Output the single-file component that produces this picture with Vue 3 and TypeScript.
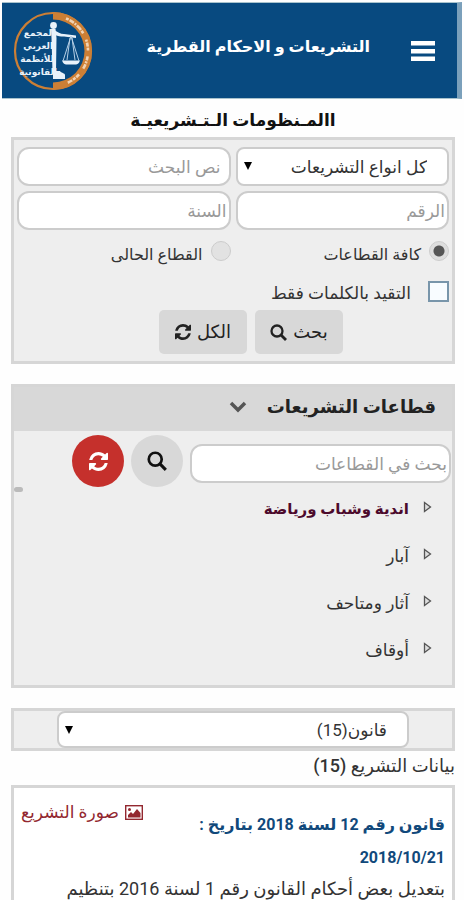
<script setup lang="ts">
import { ref } from 'vue'

const lawType = ref('all')
const scope = ref('all')
const wordsOnly = ref(false)
const group = ref('law')
const sectors = ['اندية وشباب ورياضة', 'آبار', 'آثار ومتاحف', 'أوقاف']
const activeSector = ref(0)
</script>

<template>
  <div class="page" dir="rtl" lang="ar">
    <header class="topbar">
      <button class="menu" type="button" aria-label="القائمة">
        <svg width="24" height="20" viewBox="0 0 24 20" aria-hidden="true">
          <path d="M0 0h24v4.500H0zM0 8h24v4.500H0zM0 15.500h24V20H0z" fill="#fff" />
        </svg>
      </button>
      <h1>التشريعات و الاحكام القطرية</h1>
      <svg class="logo" width="80" height="80" viewBox="0 0 80 80" aria-hidden="true">
        <circle cx="40" cy="40" r="38" fill="none" stroke="#cc7f35" stroke-width="2.200" />
        <path d="M40 1a39 39 0 0 1 0 78v-7.500a31.500 31.500 0 0 0 0-63z" fill="#cc7f35" />
        <path d="M53 7.500a35 35 0 0 1 0 65" fill="none" stroke="#f0d3b4" stroke-width="2.600" stroke-dasharray="3 1 5 1 2 1 6 1 3 7 2 1 4 1 3 6 4 1 2 1 5 7 4 1 3 1 5 12" />
        <g class="logo-text">
          <text x="42" y="25">المجمع</text>
          <text x="40" y="38">العربي</text>
          <text x="41" y="51">للأنظمة</text>
          <text x="44" y="64">القانونية</text>
        </g>
        <g fill="#e9f2fa">
          <circle cx="40.500" cy="14.500" r="3.400" />
          <path d="M38 18h4.500l1 9-.5 34h-3.500l-1-34z" />
          <path d="M40 60h7c1 2 5 2 5 4v4H40z" />
          <path d="M41 19c4 2 6 4 10 4l12 1.500v2.500l-12-1.500c-4 0-6-.5-9-1.500z" />
          <path d="M49 49.500h18c-1 3-3 4-4 4H53c-1 0-3-1-4-4z" />
        </g>
        <path d="M58 25l-8 25M58 25l8 25M57 27l-3 22M59 27l3 22" fill="none" stroke="#b6d0e6" stroke-width="1" />
      </svg>
    </header>

    <main>
      <h2 class="page-title">االمـنظومات الـتـشريعيـة</h2>

      <form class="panel search" @submit.prevent>
        <div class="fields">
          <div class="select">
            <select v-model="lawType" aria-label="نوع التشريع">
              <option value="all">كل انواع التشريعات</option>
            </select>
            <svg width="8" height="8" viewBox="0 0 8 8" aria-hidden="true"><path d="M0 0h8L4 8z" /></svg>
          </div>
          <input class="wide-pad" type="text" placeholder="نص البحث" aria-label="نص البحث" />
          <input type="text" placeholder="الرقم" aria-label="الرقم" />
          <input type="text" placeholder="السنة" aria-label="السنة" />
        </div>
        <div class="radios">
          <label><input v-model="scope" type="radio" name="scope" value="all" /><span>كافة القطاعات</span></label>
          <label><input v-model="scope" type="radio" name="scope" value="current" /><span>القطاع الحالى</span></label>
        </div>
        <label class="check"><input v-model="wordsOnly" type="checkbox" /><span>التقيد بالكلمات فقط</span></label>
        <div class="actions">
          <button type="submit">
            <span>بحث</span>
            <svg width="17" height="17" viewBox="0 0 17 17" aria-hidden="true"><circle cx="7" cy="7" r="5.500" fill="none" stroke="currentColor" stroke-width="2.300" /><path d="M11 11l5 5" stroke="currentColor" stroke-width="2.800" /></svg>
          </button>
          <button type="reset">
            <span>الكل</span>
            <svg width="16" height="16" viewBox="0 0 1536 1536" aria-hidden="true"><path fill="currentColor" d="M1511 928q0 5-1 7-64 268-268 434.500T764 1536q-146 0-282.500-55T238 1324l-129 129q-19 19-45 19t-45-19-19-45V960q0-26 19-45t45-19h448q26 0 45 19t19 45-19 45l-137 137q71 66 161 102t187 36q134 0 250-65t186-179q11-17 53-117 8-23 30-23h192q13 0 22.500 9.500t9.500 22.500zm25-800v448q0 26-19 45t-45 19h-448q-26 0-45-19t-19-45 19-45l138-138Q969 256 768 256q-134 0-250 65T332 500q-11 17-53 117-8 23-30 23H50q-13 0-22.500-9.500T18 608v-7q65-268 270-434.500T768 0q146 0 284 55.500T1297 212l130-129q19-19 45-19t45 19 19 45z" /></svg>
          </button>
        </div>
      </form>

      <section class="panel sectors">
        <div class="sectors-head">
          <h3>قطاعات التشريعات</h3>
          <svg width="18" height="12" viewBox="0 0 18 12" aria-hidden="true"><path d="M2 2l7 7 7-7" fill="none" stroke="#555" stroke-width="3.500" /></svg>
        </div>
        <div class="sector-search">
          <input type="text" placeholder="بحث في القطاعات" aria-label="بحث في القطاعات" />
          <button class="round" type="button" aria-label="بحث">
            <svg width="20" height="20" viewBox="0 0 17 17" aria-hidden="true"><circle cx="7" cy="7" r="5.500" fill="none" stroke="currentColor" stroke-width="2.300" /><path d="M11 11l5 5" stroke="currentColor" stroke-width="2.600" /></svg>
          </button>
          <button class="round red" type="button" aria-label="تحديث">
            <svg width="19" height="19" viewBox="0 0 1536 1536" aria-hidden="true"><path fill="currentColor" d="M1511 928q0 5-1 7-64 268-268 434.500T764 1536q-146 0-282.500-55T238 1324l-129 129q-19 19-45 19t-45-19-19-45V960q0-26 19-45t45-19h448q26 0 45 19t19 45-19 45l-137 137q71 66 161 102t187 36q134 0 250-65t186-179q11-17 53-117 8-23 30-23h192q13 0 22.500 9.500t9.500 22.500zm25-800v448q0 26-19 45t-45 19h-448q-26 0-45-19t-19-45 19-45l138-138Q969 256 768 256q-134 0-250 65T332 500q-11 17-53 117-8 23-30 23H50q-13 0-22.500-9.500T18 608v-7q65-268 270-434.500T768 0q146 0 284 55.500T1297 212l130-129q19-19 45-19t45 19 19 45z" /></svg>
          </button>
        </div>
        <div class="list">
          <div class="thumb"></div>
          <ul>
            <li v-for="(name, i) in sectors" :key="name">
              <button type="button" :class="{ active: i === activeSector }" @click="activeSector = i">
                <svg width="9" height="12" viewBox="0 0 9 12" aria-hidden="true"><path d="M1.500 1.500v9l6-4.500z" fill="#ddd" stroke="#555" stroke-width="1.300" /></svg>
                <span>{{ name }}</span>
              </button>
            </li>
          </ul>
        </div>
      </section>

      <div class="panel group">
        <div class="select">
          <select v-model="group" aria-label="نوع النتائج">
            <option value="law">قانون(15)</option>
          </select>
          <svg width="8" height="8" viewBox="0 0 8 8" aria-hidden="true"><path d="M0 0h8L4 8z" /></svg>
        </div>
      </div>

      <h3 class="count">بيانات التشريع <b>(15)</b></h3>

      <article class="panel result">
        <div class="result-head">
          <h4>قانون رقم 12 لسنة 2018 بتاريخ : 2018/10/21</h4>
          <a href="#image">
            <svg width="18" height="15" viewBox="0 0 18 15" aria-hidden="true"><rect x=".7" y=".7" width="16.600" height="13.600" fill="none" stroke="currentColor" stroke-width="1.400" /><circle cx="4.500" cy="4.500" r="1.500" fill="currentColor" /><path d="M3 12.500V10l3-3 2 2 4-5 3.500 4v4.500z" fill="currentColor" /></svg>
            <span>صورة التشريع</span>
          </a>
        </div>
        <p>بتعديل بعض أحكام القانون رقم 1 لسنة 2016 بتنظيم</p>
      </article>
    </main>
  </div>
</template>

<style>
html {
  scrollbar-width: none;
  background: #fefefe;
}
</style>

<style scoped>
.page {
  box-sizing: border-box;
  padding: 2px 2px 0;
  font-family: Roboto, "DejaVu Sans", sans-serif;
  font-size: 17px;
  line-height: 24px;
  color: #333;
}
.page * {
  box-sizing: border-box;
}
h1, h2, h3, h4, p, ul {
  margin: 0;
  padding: 0;
}
button, input, select {
  font: inherit;
  color: inherit;
  margin: 0;
}
button {
  border: 0;
  background: none;
  padding: 0;
}
.topbar {
  display: flex;
  align-items: center;
  height: 97px;
  padding: 0 22px 0 11px;
  background: #084a80;
  border: solid #a9c3cd;
  border-width: 1px 5px 1px 0;
  border-right-color: #7ba0bb;
}
.menu {
  display: flex;
}
.topbar h1 {
  margin-inline-start: 41px;
  padding-bottom: 8px;
  font-size: 16px;
  line-height: 24px;
  color: #fff;
  white-space: nowrap;
}
.logo {
  margin-inline-start: auto;
  flex: none;
}
.logo-text {
  font-family: "DejaVu Sans", sans-serif;
  font-size: 9px;
  font-weight: bold;
  fill: #e9f2fa;
}
main {
  padding: 0 7px 0 9px;
}
.page-title {
  padding: 9px 0 5px;
  text-align: center;
  font-size: 17px;
  line-height: 24px;
  color: #111;
}
.panel {
  border: 3px solid #d6d6d6;
  background: #eee;
}
.search {
  padding: 7px 3px;
}
.fields {
  display: grid;
  grid-template-columns: 1fr 1fr;
  gap: 5px;
}
input[type="text"], select {
  width: 100%;
  min-width: 0;
  height: 39px;
  padding: 0 2px;
  border: 2px solid #ccc;
  border-radius: 12px;
  background: #fff;
}
input::placeholder {
  color: #999;
  opacity: 1;
}
input.wide-pad {
  padding: 0 8px;
}
.select {
  position: relative;
}
select {
  appearance: none;
  display: block;
  padding: 0 20px;
  border-radius: 8px;
}
.select svg {
  position: absolute;
  left: 8px;
  top: 15px;
}
.radios {
  display: grid;
  grid-template-columns: 1fr 1fr;
  gap: 5px;
  padding-top: 8px;
}
.radios label, .check {
  display: flex;
  align-items: center;
  gap: 8px;
  height: 34px;
}
.radios label {
  font-size: 16px;
}
.radios input {
  appearance: none;
  width: 20px;
  height: 20px;
  align-self: flex-start;
  margin-top: 3px;
  border: 1px solid #ccc;
  border-radius: 50%;
  background: #e2e2e2;
}
.radios input:checked {
  background: radial-gradient(circle, #555 0 5px, #ddd 6px);
}
.check {
  gap: 17px;
  height: 38px;
}
.check span {
  padding-top: 3px;
}
.check input {
  appearance: none;
  width: 21px;
  height: 21px;
  border: 2px solid #7895aa;
  background: #f8fcff;
}
.actions {
  display: flex;
  justify-content: center;
  gap: 8px;
  padding-left: 36px;
}
.actions button {
  display: flex;
  align-items: center;
  justify-content: center;
  gap: 6px;
  min-width: 88px;
  height: 44px;
  border-radius: 5px;
  background: #d8d8d8;
  font-size: 18px;
  color: #222;
}
.sectors {
  margin-top: 20px;
  padding-bottom: 14px;
}
.sectors-head {
  display: flex;
  align-items: center;
  gap: 20px;
  height: 44px;
  padding: 0 16px 4px;
  background: #d8d8d8;
}
.sectors-head h3 {
  font-size: 18px;
  line-height: 24px;
  color: #222;
}
.sector-search {
  display: flex;
  align-items: center;
  gap: 7px;
  padding: 4px 1px 0 58px;
}
.sector-search input {
  flex: 1;
  margin-top: 5px;
}
.round {
  display: flex;
  align-items: center;
  justify-content: center;
  flex: none;
  width: 52px;
  height: 52px;
  border-radius: 50%;
  background: #d8d8d8;
  color: #111;
}
.red {
  background: #c5302c;
  color: #fff;
}
.list {
  position: relative;
  margin-top: -4px;
}
.thumb {
  position: absolute;
  left: 0;
  top: 4px;
  width: 9px;
  height: 5px;
  border-radius: 3px;
  background: #bbb;
}
ul {
  list-style: none;
}
li button {
  display: flex;
  align-items: center;
  gap: 14px;
  width: 100%;
  height: 47px;
  padding: 0 20px;
}
li span {
  padding-top: 4px;
}
.active {
  color: #4c0a2c;
  font-size: 15px;
  font-weight: bold;
}
.group {
  margin-top: 20px;
  padding: 0 43px;
}
.group select {
  height: 37px;
}
.count {
  padding-top: 3px;
  font-size: 18px;
  line-height: 24px;
  font-weight: normal;
}
.count b {
  font-weight: 500;
}
.result {
  margin-top: 7px;
  padding: 10px 7px 8px;
  background: #fff;
}
.result-head {
  display: flex;
  align-items: flex-start;
  gap: 16px;
}
.result h4 {
  flex: 1;
  padding-top: 10px;
  font-size: 16px;
  line-height: 33px;
  color: #11497b;
}
.result a {
  display: flex;
  align-items: center;
  gap: 6px;
  padding-top: 2px;
  color: #932830;
  text-decoration: none;
  white-space: nowrap;
}
.result p {
  font-size: 18px;
  line-height: 30px;
  white-space: nowrap;
}
</style>
